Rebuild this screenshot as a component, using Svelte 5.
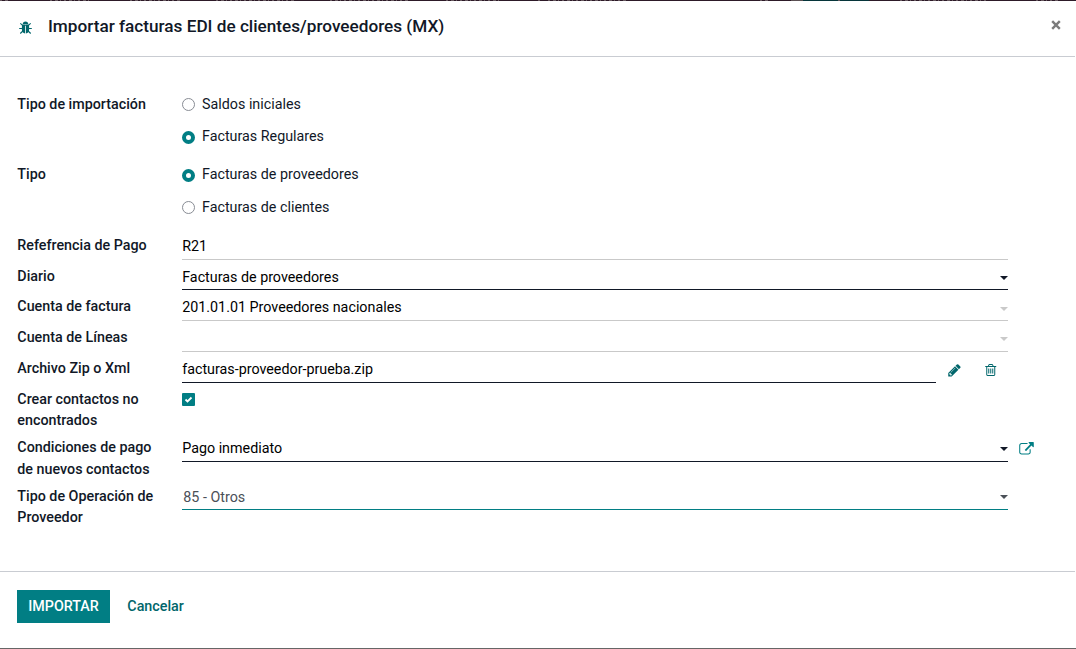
<script>
  const radios = [
    { label: 'Tipo de importación', height: 70, options: [['Saldos iniciales', false, 0], ['Facturas Regulares', true, 32]] },
    { label: 'Tipo', height: 71, options: [['Facturas de proveedores', true, 0], ['Facturas de clientes', false, 33]] }
  ];
  const fields = [
    { label: 'Refefrencia de Pago', value: 'R21', height: 31, line: 'soft', arrow: '' },
    { label: 'Diario', value: 'Facturas de proveedores', height: 30, line: 'dark short', arrow: 'dark' },
    { label: 'Cuenta de factura', value: '201.01.01 Proveedores nacionales', height: 31, line: 'soft', arrow: 'soft' },
    { label: 'Cuenta de Líneas', value: '', height: 31, line: 'soft', arrow: 'soft up' },
    { label: 'Archivo Zip o Xml', value: 'facturas-proveedor-prueba.zip', height: 31, line: 'dark', file: true },
    { label: 'Crear contactos no encontrados', height: 48, check: true },
    { label: 'Condiciones de pago de nuevos contactos', value: 'Pago inmediato', height: 49, line: 'dark', arrow: 'dark', link: true },
    { label: 'Tipo de Operación de Proveedor', value: '85 - Otros', height: 48, line: 'teal short', arrow: 'gray' }
  ];
  // Start and width of each menu caption peeking out above the dialog.
  const captions = [[0, 10], [50, 42], [130, 50], [216, 78], [330, 80], [446, 56], [538, 4], [548, 78], [760, 8], [838, 4], [900, 88], [1036, 24]];
</script>

<div class="backdrop">
  <svg width="1076" height="1" viewBox="0 0 1076 1">
    {#each captions as [x, w]}
      <path d="M{x} .5h{w}" />
    {/each}
  </svg>
</div>
<div class="dialog">
  <header>
    <svg class="bug" viewBox="0 0 13 13"><path d="M3.700 3.200Q3.900 .5 6.500 .5T9.300 3.200Z" /><path d="M2.900 3.800H6.100V12.400Q2.900 12 2.900 8.500ZM6.900 3.800H10.100V8.500Q10.100 12 6.900 12.400Z" /><path class="legs" d="M1.300 2.300L3.400 4.200M11.700 2.300L9.600 4.200M.2 7.500H3.500M9.500 7.500H12.800M1.300 12.500L3.900 10M11.700 12.500L9.100 10M2.900 4.200H10.100" /></svg>
    <h1>Importar facturas EDI de clientes/proveedores (MX)</h1>
    <button class="close" aria-label="Cerrar"><svg viewBox="0 0 10 10"><path d="M1.200 1.200L8.800 8.800M8.800 1.200L1.200 8.800" /></svg></button>
  </header>
  <main>
    {#each radios as group}
      <div class="row" style="height:{group.height}px">
        <span class="label">{group.label}</span>
        <div class="options">
          {#each group.options as [text, on, offset]}
            <div class="option" style="height:{offset ? 21 : group.height === 70 ? 32 : 33}px"><i class:on></i><span>{text}</span></div>
          {/each}
        </div>
      </div>
    {/each}
    {#each fields as f}
      <div class="row" style="height:{f.height}px">
        <span class="label" class:loose={f.link}>{f.label}</span>
        {#if f.check}
          <span class="check"><svg viewBox="0 0 13 13"><path d="M3.500 6.500L5.500 8.500L9.500 4.500" /></svg></span>
        {:else}
          <div class="field {f.line}" class:file={f.file}>
            <span>{f.value}</span>
            {#if f.arrow}<b class="arrow {f.arrow}"></b>{/if}
          </div>
        {/if}
        {#if f.file}
          <svg class="pencil" viewBox="128 128 1536 1536"><path d="M491 1536l91-91-235-235-91 91v107h128v128h107zm523-928q0-22-22-22-10 0-17 7l-542 542q-7 7-7 17 0 22 22 22 10 0 17-7l542-542q7-7 7-17zm-54-192l416 416-832 832h-416v-416zm683 96q0 53-37 90l-166 166-416-416 166-165q36-38 90-38 53 0 91 38l235 234q37 39 37 91z" /></svg>
          <svg class="trash" viewBox="192 128 1408 1536"><path d="M704 736v576q0 14-9 23t-23 9h-64q-14 0-23-9t-9-23v-576q0-14 9-23t23-9h64q14 0 23 9t9 23zm256 0v576q0 14-9 23t-23 9h-64q-14 0-23-9t-9-23v-576q0-14 9-23t23-9h64q14 0 23 9t9 23zm256 0v576q0 14-9 23t-23 9h-64q-14 0-23-9t-9-23v-576q0-14 9-23t23-9h64q14 0 23 9t9 23zm128 724v-948h-896v948q0 22 7 40.500t14.500 27 10.500 8.500h832q3 0 10.500-8.500t14.500-27 7-40.500zm-672-1076h448l-48-117q-7-9-17-11h-317q-10 2-17 11zm928 32v64q0 14-9 23t-23 9h-96v948q0 83-47 143.500t-113 60.500h-832q-66 0-113-58.500t-47-141.500v-952h-96q-14 0-23-9t-9-23v-64q0-14 9-23t23-9h309l70-167q15-37 54-63t79-26h320q40 0 79 26t54 63l70 167h309q14 0 23 9t9 23z" /></svg>
        {/if}
        {#if f.link}
          <svg class="link" viewBox="0 0 1792 1536"><path d="M1408 928v320q0 119-84.500 203.500t-203.500 84.500h-832q-119 0-203.500-84.500t-84.500-203.500v-832q0-119 84.500-203.500t203.500-84.500h704q14 0 23 9t9 23v64q0 14-9 23t-23 9h-704q-66 0-113 47t-47 113v832q0 66 47 113t113 47h832q66 0 113-47t47-113v-320q0-14 9-23t23-9h64q14 0 23 9t9 23zm384-864v512q0 26-19 45t-45 19-45-19l-176-176-652 652q-10 10-23 10t-23-10l-114-114q-10-10-10-23t10-23l652-652-176-176q-19-19-19-45t19-45 45-19h512q26 0 45 19t19 45z" /></svg>
        {/if}
      </div>
    {/each}
  </main>
  <footer>
    <button class="primary">IMPORTAR</button>
    <button class="cancel">Cancelar</button>
  </footer>
</div>
<div class="bottom"></div>

<style>
  :global(body) { margin: 0; background: #fff; }
  .backdrop { height: 1px; background: linear-gradient(90deg, #2d1a28 0 791px, #5b5053 791px 803px, #06353a 803px 869px, #2d1a28 869px); }
  .backdrop path { stroke: #67585f; stroke-dasharray: 2 3 3 2 1 3; }
  .dialog { height: 647px; display: flex; flex-direction: column; font: 14.3px/21px Roboto, sans-serif; color: #111827; }
  header { width: 1075px; height: 55px; border-bottom: 1px solid #c9ccd2; display: flex; flex: none; }
  h1 { margin: 13px 0 0 16px; font-size: 17.180px; line-height: 24px; font-weight: 500; }
  svg { display: block; flex: none; fill: #017e84; }
  .bug { width: 13px; height: 13px; margin: 20px 0 0 19px; fill: #01666b; }
  .legs { fill: none; stroke: #01666b; stroke-width: 1.100; }
  button { border: 0; background: none; padding: 0; font: inherit; }
  .close { width: 10px; height: 10px; margin: 19px 14px 0 auto; }
  .close svg { width: 10px; height: 10px; fill: none; stroke: #7b7b7b; stroke-width: 2.400; }
  main { height: 477px; padding: 37px 0 0 17px; box-sizing: content-box; flex: none; }
  .row { display: flex; align-items: flex-start; }
  .label { box-sizing: border-box; width: 145px; padding-left: .3px; margin-right: 20px; flex: none; font-weight: 500; }
  .loose { line-height: 22px; margin-top: -1px; }
  .option { display: flex; align-items: flex-start; }
  i { box-sizing: border-box; width: 13px; height: 13px; margin: 4px 7px 0 0; border: 1px solid #888c94; border-radius: 50%; }
  i.on { border: 4px solid #017e84; margin-top: 5px; }
  .field { box-sizing: border-box; width: 826px; height: 25px; padding-top: 1px; border-bottom: 1px solid #c9c9c9; display: flex; justify-content: space-between; color: #000; }
  .field span { padding-left: .2px; }
  .short { height: 24px; }
  .dark { border-color: #111827; }
  .teal { border-color: #017e84; color: #4b5058; }
  .teal span { padding-left: 1.300px; }
  .file { width: 754px; }
  .arrow { width: 0; height: 0; margin: 10px 0 0; border: 4px solid transparent; border-bottom: 0; border-top-color: #111827; }
  .arrow.dark { margin-top: 9px; }
  .arrow.soft { border-top-color: #c9c9c9; }
  .arrow.up { margin-top: 9px; }
  .arrow.gray { border-top-color: #4b5058; margin-top: 8px; }
  .check { width: 13px; height: 13px; margin-top: 4px; border-radius: 1px; background: #017e84; }
  .check svg { width: 13px; height: 13px; fill: none; stroke: #fff; stroke-width: 1.800; }
  .pencil { width: 13px; height: 12.500px; margin: 6px 0 0 12px; fill: #01666b; }
  .trash { width: 11.500px; height: 12px; margin: 6px 0 0 24px; fill: #01666b; }
  .link { width: 15px; height: 12.500px; margin: 5px 0 0 11px; }
  footer { width: 1058px; padding: 18px 0 0 17px; border-top: 1px solid #c9ccd2; display: flex; align-items: flex-start; }
  .primary { width: 93px; height: 33px; background: #017e84; color: #fff; font-weight: 500; }
  .cancel { height: 33px; margin-left: 17.300px; color: #01666b; font-weight: 500; }
  .bottom { height: 1px; background: #666; }
</style>
